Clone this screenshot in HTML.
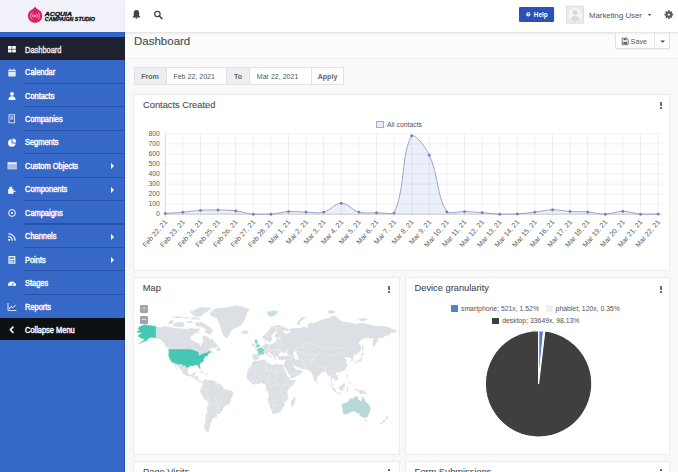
<!DOCTYPE html>
<html><head><meta charset="utf-8">
<style>
*{margin:0;padding:0;box-sizing:border-box}
html,body{width:678px;height:472px;overflow:hidden;background:#f9f9f9;font-family:"Liberation Sans",sans-serif}
.abs{position:absolute}
svg.abs{overflow:visible}
#hdrL{left:0;top:0;width:125px;height:32px;background:#f1f2fa}
#hdrR{left:125px;top:0;width:553px;height:32.5px;background:#fff;border-bottom:1px solid #e6e6e6;box-shadow:0 1px 3px rgba(0,0,0,0.07);z-index:2}
#side{left:0;top:32px;width:125px;height:440px;background:#3668c8}
.nav{position:absolute;left:0;width:125px;height:23.35px;color:#fff;font-size:8.1px;-webkit-text-stroke:0.4px currentColor}
.nav .t{position:absolute;left:25px;top:8.3px;line-height:7px;white-space:nowrap;transform:scale(0.92,1.1);transform-origin:0 0}
.nav .sep{position:absolute;left:24px;right:0;top:-0.6px;height:1.2px;background:#2651a8}
.nav svg{position:absolute;left:7px;top:7.5px}
.nav .car{position:absolute;left:111px;top:9.6px;width:0;height:0;border-left:3.2px solid #fff;border-top:3px solid transparent;border-bottom:3px solid transparent}
#phdr{left:125px;top:33px;width:553px;height:25.5px;background:#fcfcfc;border-bottom:1px solid #f0f0f0}
.panel{position:absolute;background:#fff;border:1px solid #ececec;box-shadow:0 0 1px rgba(0,0,0,0.03)}
.ptitle{position:absolute;font-size:9.3px;color:#484d53;white-space:nowrap;line-height:10px;-webkit-text-stroke:0.1px #484d53}
.keb{position:absolute;width:1.6px;height:7px}
.keb i{position:absolute;left:-0.2px;width:2px;height:2px;border-radius:50%;background:#3a3a3a}
.yl{font-size:6.85px;fill:#5a5a5a;text-anchor:end;font-family:"Liberation Sans",sans-serif}
.xl{text-rendering:geometricPrecision;font-size:7px;fill:#5a5a5a;text-anchor:end;dominant-baseline:middle;font-family:"Liberation Sans",sans-serif}
.sy{display:inline-block;transform:scaleY(1.12)}
.lg{transform:scaleY(1.1);transform-origin:0 50%;position:absolute;font-size:6.85px;color:#555;white-space:nowrap;line-height:7px}
.addon{position:absolute;top:67.4px;height:17.6px;background:#eceef1;border:1px solid #e1e3e6;color:#666;font-weight:bold;font-size:7.1px;line-height:18.2px;text-align:center}
.inp{position:absolute;top:67.4px;height:17.6px;background:#fff;border:1px solid #e1e3e6;border-left:none;color:#555;font-size:7.05px;line-height:17.6px;padding-left:6.8px}
</style></head><body>

<!-- header -->
<div id="hdrL" class="abs">
  <svg class="abs" style="left:0;top:0" width="125" height="32">
    <path d="M35.1 6.9 C36 8.7 38.6 9.5 40.3 11.3 C42.6 13.7 42.6 18.4 40 20.8 C37.4 23.2 32.8 23.2 30.2 20.8 C27.6 18.4 27.6 13.7 29.9 11.3 C31.6 9.5 34.2 8.7 35.1 6.9Z" fill="#dc1f66" stroke="#b8104f" stroke-width="0.4"/>
    <path d="M32.2 12.4 A4.6 4.6 0 0 0 32.2 19.4 M38 12.4 A4.6 4.6 0 0 1 38 19.4" stroke="#f6b9d0" stroke-width="0.8" fill="none"/>
    <path d="M33.5 14.2 A2.3 2.3 0 0 0 33.5 17.6 M36.7 14.2 A2.3 2.3 0 0 1 36.7 17.6" stroke="#fde6ef" stroke-width="0.8" fill="none"/>
    <circle cx="35.1" cy="15.9" r="0.9" fill="#fff"/>
    <text x="44.8" y="15.6" font-family="Liberation Sans" font-weight="bold" font-style="italic" font-size="5.6" textLength="27.2" lengthAdjust="spacingAndGlyphs" fill="#111" stroke="#111" stroke-width="0.35">ACQUIA</text>
    <text x="44.8" y="20.9" font-family="Liberation Sans" font-weight="bold" font-style="italic" font-size="5.2" textLength="50.2" lengthAdjust="spacingAndGlyphs" fill="#111" stroke="#111" stroke-width="0.3">CAMPAIGN STUDIO</text>
  </svg>
</div>
<div id="hdrR" class="abs"></div>
<svg class="abs" style="left:0;top:0;z-index:3" width="678" height="32">
  <!-- bell -->
  <path d="M136.4 10 C138.6 10 139.2 11.8 139.2 13.6 L139.2 15.8 L140.6 17.6 L132.3 17.6 L133.7 15.8 L133.7 13.6 C133.7 11.8 134.3 10 136.4 10Z M135.3 17.8 A1.2 1.2 0 0 0 137.6 17.8Z" fill="#444"/>
  <!-- search -->
  <circle cx="157.4" cy="14" r="2.7" fill="none" stroke="#444" stroke-width="1.2"/>
  <path d="M159.3 16 L162 18.6" stroke="#444" stroke-width="1.5" stroke-linecap="round"/>
  <!-- help button -->
  <rect x="519" y="6.9" width="35.1" height="15" rx="1.2" fill="#2c50b8"/>
  <circle cx="528.3" cy="14.4" r="2.1" fill="#f2f4fb"/>
  <text x="528.35" y="15.7" font-size="3.5" font-weight="bold" fill="#2c50b8" text-anchor="middle" font-family="Liberation Sans">?</text>
  <text x="533.8" y="16.8" font-size="6.4" font-weight="bold" fill="#fff" font-family="Liberation Sans">Help</text>
  <!-- avatar -->
  <rect x="566.6" y="6.2" width="17" height="17" fill="#ececec" stroke="#dadada" stroke-width="0.8"/>
  <circle cx="575.1" cy="14.7" r="6.6" fill="#f7f7f7"/>
  <circle cx="575.1" cy="12.4" r="2.6" fill="#dcdcdc"/>
  <path d="M570.6 19.4 C571.2 16.6 573 15.8 575.1 15.8 C577.2 15.8 579 16.6 579.6 19.4 C578.4 20.6 576.8 21.2 575.1 21.2 C573.4 21.2 571.8 20.6 570.6 19.4Z" fill="#dcdcdc"/>
  <text x="589" y="17.9" font-size="7.8" fill="#555" font-family="Liberation Sans">Marketing User</text>
  <path d="M647.6 14 L651.4 14 L649.5 16Z" fill="#555"/>
  <!-- gear -->
  <g transform="translate(668.8 14.6)" fill="#555">
    <circle r="3" />
    <g id="teeth"><rect x="-0.9" y="-4.3" width="1.8" height="8.6"/><rect x="-0.9" y="-4.3" width="1.8" height="8.6" transform="rotate(45)"/><rect x="-0.9" y="-4.3" width="1.8" height="8.6" transform="rotate(90)"/><rect x="-0.9" y="-4.3" width="1.8" height="8.6" transform="rotate(135)"/></g>
    <circle r="1.2" fill="#fff"/>
  </g>
</svg>

<!-- sidebar -->
<div id="side" class="abs">
  <div class="abs" style="left:0;top:0;width:125px;height:5.4px;background:#3265c8"></div>
  <div class="abs" style="left:124px;top:0;width:1px;height:440px;background:#2f52b0"></div>
  <div class="abs" style="left:125px;top:0;width:1.5px;height:440px;background:#f4f8ff"></div>
</div>
<div class="nav" style="top:37.4px;background:#1e2230;height:22.6px">
  <svg width="10" height="10"><rect x="1" y="1" width="3.6" height="2.9" fill="#fff"/><rect x="5.2" y="1" width="3.6" height="2.9" fill="#fff"/><rect x="1" y="4.5" width="3.6" height="2.9" fill="#fff"/><rect x="5.2" y="4.5" width="3.6" height="2.9" fill="#fff"/></svg>
  <span class="t" style="color:#e8e8ea">Dashboard</span></div>
<div class="nav" style="top:60px">
  <svg width="10" height="10"><rect x="1.3" y="1.8" width="7.4" height="6.6" rx="0.6" fill="#e4ebf8"/><rect x="1.3" y="3" width="7.4" height="0.6" fill="#3668c8"/><rect x="2.6" y="0.6" width="0.9" height="1.8" fill="#e4ebf8"/><rect x="6.5" y="0.6" width="0.9" height="1.8" fill="#e4ebf8"/></svg>
  <span class="t">Calendar</span></div>
<div class="nav" style="top:83.3px"><div class="sep"></div>
  <svg width="10" height="10"><circle cx="5" cy="2.8" r="1.9" fill="#fff"/><path d="M1.5 9 C1.5 6.2 3 5.2 5 5.2 C7 5.2 8.5 6.2 8.5 9Z" fill="#fff"/></svg>
  <span class="t">Contacts</span></div>
<div class="nav" style="top:106.75px"><div class="sep"></div>
  <svg width="10" height="10"><rect x="2" y="0.8" width="5.6" height="8" fill="none" stroke="#dfe6f5" stroke-width="0.9"/><rect x="3.3" y="2.2" width="3" height="3.6" fill="#9fb6e6"/></svg>
  <span class="t">Companies</span></div>
<div class="nav" style="top:130.2px"><div class="sep"></div>
  <svg width="10" height="10"><path d="M4.5 1.2 A3.8 3.8 0 1 0 8.6 5.6 L4.5 5.6Z" fill="#fff"/><path d="M5.5 0.6 A3.8 3.8 0 0 1 9.2 4.5 L5.5 4.5Z" fill="#fff"/></svg>
  <span class="t">Segments</span></div>
<div class="nav" style="top:153.65px"><div class="sep"></div>
  <svg width="10" height="10"><rect x="0.9" y="1.6" width="8.4" height="6.4" fill="#a9bce6"/><rect x="0.9" y="1.6" width="8.4" height="1.5" fill="#eef2fb"/><rect x="0.9" y="1.6" width="8.4" height="6.4" fill="none" stroke="#dfe6f5" stroke-width="0.6"/></svg>
  <span class="t">Custom Objects</span><i class="car"></i></div>
<div class="nav" style="top:177.1px"><div class="sep"></div>
  <svg width="10" height="10"><rect x="1.2" y="4" width="5.2" height="4.8" fill="#fff"/><circle cx="3.8" cy="3" r="1.6" fill="#fff"/><rect x="6.4" y="5.8" width="2" height="1.2" fill="#fff"/></svg>
  <span class="t">Components</span><i class="car"></i></div>
<div class="nav" style="top:200.55px"><div class="sep"></div>
  <svg width="10" height="10"><circle cx="5" cy="5" r="3.4" fill="none" stroke="#fff" stroke-width="1"/><circle cx="5" cy="5" r="1.1" fill="#fff"/></svg>
  <span class="t">Campaigns</span></div>
<div class="nav" style="top:224px"><div class="sep"></div>
  <svg width="10" height="10"><circle cx="2.2" cy="7.8" r="1.1" fill="#fff"/><path d="M1.3 4.6 A4 4 0 0 1 5.4 8.7" fill="none" stroke="#fff" stroke-width="1.1"/><path d="M1.3 1.8 A6.8 6.8 0 0 1 8.2 8.7" fill="none" stroke="#fff" stroke-width="1.1"/></svg>
  <span class="t">Channels</span><i class="car"></i></div>
<div class="nav" style="top:247.45px"><div class="sep"></div>
  <svg width="10" height="10"><rect x="1.4" y="1" width="7" height="7.8" fill="#e6ecf8"/><rect x="2.6" y="2.2" width="4.6" height="1.6" fill="#5f86d4"/><rect x="2.6" y="5" width="1.2" height="1" fill="#5f86d4"/><rect x="4.4" y="5" width="1.2" height="1" fill="#5f86d4"/><rect x="2.6" y="6.6" width="1.2" height="1" fill="#5f86d4"/><rect x="4.4" y="6.6" width="1.2" height="1" fill="#5f86d4"/><rect x="6" y="5" width="1.2" height="2.6" fill="#5f86d4"/></svg>
  <span class="t">Points</span><i class="car"></i></div>
<div class="nav" style="top:270.9px"><div class="sep"></div>
  <svg width="10" height="10"><path d="M0.8 7.8 A4.2 4.2 0 0 1 9.2 7.8Z" fill="#fff"/><path d="M5 7.4 L6.8 4.6" stroke="#3668c8" stroke-width="0.9"/></svg>
  <span class="t">Stages</span></div>
<div class="nav" style="top:294.35px"><div class="sep"></div>
  <svg width="10" height="10"><path d="M1 1 L1 8.5 L9.4 8.5" fill="none" stroke="#e8edf8" stroke-width="0.9"/><path d="M2 7 L4 4.4 L5.8 5.8 L8.6 2.8" fill="none" stroke="#fff" stroke-width="1"/></svg>
  <span class="t">Reports</span></div>
<div class="nav" style="top:317.8px;background:#0e1114;height:22.6px">
  <svg width="10" height="10"><path d="M6.4 1.6 L3.4 4.8 L6.4 8" fill="none" stroke="#fff" stroke-width="1.6"/></svg>
  <span class="t">Collapse Menu</span></div>

<!-- page header -->
<div id="phdr" class="abs"></div>
<div class="abs" style="left:134px;top:35px;font-size:11.5px;color:#474c52;line-height:12px;-webkit-text-stroke:0.15px #474c52">Dashboard</div>
<div class="abs" style="left:614.9px;top:32.3px;width:55.2px;height:16.6px;background:#fff;border:1px solid #e2e2e2;border-radius:1.5px;box-shadow:0 1px 1px rgba(0,0,0,0.05)"></div>
<div class="abs" style="left:654px;top:33px;width:1px;height:15.4px;background:#e6e6e6"></div>
<svg class="abs" style="left:0;top:0" width="678" height="60">
  <path d="M622.2 38.2 L627 38.2 L628.1 39.3 L628.1 44.7 L622.2 44.7Z" fill="none" stroke="#666" stroke-width="0.9"/>
  <rect x="623.6" y="38.4" width="3" height="1.8" fill="#666"/>
  <rect x="623.3" y="41.8" width="3.8" height="2.4" fill="#666"/>
  <path d="M660.4 40.4 L665 40.4 L662.7 42.8Z" fill="#444"/>
</svg>
<div class="abs" style="left:630.6px;top:38.2px;font-size:7.2px;color:#555;line-height:8px">Save</div>

<!-- date range -->
<div class="addon" style="left:133.5px;width:33.1px"><span class="sy">From</span></div>
<div class="inp" style="left:166.6px;width:60.6px"><span class="sy">Feb 22, 2021</span></div>
<div class="addon" style="left:227.2px;width:22.8px;border-left:none"><span class="sy">To</span></div>
<div class="inp" style="left:250px;width:62px"><span class="sy">Mar 22, 2021</span></div>
<div class="inp" style="left:312px;width:32px;padding-left:0;text-align:center;font-weight:bold;color:#666;font-size:7.1px;line-height:18.8px"><span class="sy">Apply</span></div>

<!-- contacts created panel -->
<div class="panel" style="left:133px;top:94px;width:537px;height:177px"></div>
<div class="ptitle" style="left:143px;top:99.6px">Contacts Created</div>
<div class="keb" style="left:659.8px;top:101.6px"><i style="top:0"></i><i style="top:2.5px"></i><i style="top:5px"></i></div>
<div class="abs" style="left:376.2px;top:120.8px;width:7.6px;height:7.6px;background:#e8ecf8;border:0.8px solid #a2acd6"></div>
<div class="lg" style="left:387px;top:120.6px">All contacts</div>
<svg class="abs" style="left:0;top:0" width="678" height="472" viewBox="0 0 678 472"><line x1="165.3" y1="214.20" x2="662" y2="214.20" stroke="#000" stroke-opacity="0.1" stroke-width="0.6"/><text x="159.8" y="216.40" class="yl">0</text><line x1="165.3" y1="204.15" x2="662" y2="204.15" stroke="#000" stroke-opacity="0.1" stroke-width="0.6"/><text x="159.8" y="206.35" class="yl">100</text><line x1="165.3" y1="194.10" x2="662" y2="194.10" stroke="#000" stroke-opacity="0.1" stroke-width="0.6"/><text x="159.8" y="196.30" class="yl">200</text><line x1="165.3" y1="184.05" x2="662" y2="184.05" stroke="#000" stroke-opacity="0.1" stroke-width="0.6"/><text x="159.8" y="186.25" class="yl">300</text><line x1="165.3" y1="174.00" x2="662" y2="174.00" stroke="#000" stroke-opacity="0.1" stroke-width="0.6"/><text x="159.8" y="176.20" class="yl">400</text><line x1="165.3" y1="163.95" x2="662" y2="163.95" stroke="#000" stroke-opacity="0.1" stroke-width="0.6"/><text x="159.8" y="166.15" class="yl">500</text><line x1="165.3" y1="153.90" x2="662" y2="153.90" stroke="#000" stroke-opacity="0.1" stroke-width="0.6"/><text x="159.8" y="156.10" class="yl">600</text><line x1="165.3" y1="143.85" x2="662" y2="143.85" stroke="#000" stroke-opacity="0.1" stroke-width="0.6"/><text x="159.8" y="146.05" class="yl">700</text><line x1="165.3" y1="133.80" x2="662" y2="133.80" stroke="#000" stroke-opacity="0.1" stroke-width="0.6"/><text x="159.8" y="136.00" class="yl">800</text><line x1="165.30" y1="133.80" x2="165.30" y2="217.20" stroke="#000" stroke-opacity="0.25" stroke-width="0.6"/><line x1="182.90" y1="133.80" x2="182.90" y2="217.20" stroke="#000" stroke-opacity="0.1" stroke-width="0.6"/><line x1="200.50" y1="133.80" x2="200.50" y2="217.20" stroke="#000" stroke-opacity="0.1" stroke-width="0.6"/><line x1="218.10" y1="133.80" x2="218.10" y2="217.20" stroke="#000" stroke-opacity="0.1" stroke-width="0.6"/><line x1="235.70" y1="133.80" x2="235.70" y2="217.20" stroke="#000" stroke-opacity="0.1" stroke-width="0.6"/><line x1="253.30" y1="133.80" x2="253.30" y2="217.20" stroke="#000" stroke-opacity="0.1" stroke-width="0.6"/><line x1="270.90" y1="133.80" x2="270.90" y2="217.20" stroke="#000" stroke-opacity="0.1" stroke-width="0.6"/><line x1="288.50" y1="133.80" x2="288.50" y2="217.20" stroke="#000" stroke-opacity="0.1" stroke-width="0.6"/><line x1="306.10" y1="133.80" x2="306.10" y2="217.20" stroke="#000" stroke-opacity="0.1" stroke-width="0.6"/><line x1="323.70" y1="133.80" x2="323.70" y2="217.20" stroke="#000" stroke-opacity="0.1" stroke-width="0.6"/><line x1="341.30" y1="133.80" x2="341.30" y2="217.20" stroke="#000" stroke-opacity="0.1" stroke-width="0.6"/><line x1="358.90" y1="133.80" x2="358.90" y2="217.20" stroke="#000" stroke-opacity="0.1" stroke-width="0.6"/><line x1="376.50" y1="133.80" x2="376.50" y2="217.20" stroke="#000" stroke-opacity="0.1" stroke-width="0.6"/><line x1="394.10" y1="133.80" x2="394.10" y2="217.20" stroke="#000" stroke-opacity="0.1" stroke-width="0.6"/><line x1="411.70" y1="133.80" x2="411.70" y2="217.20" stroke="#000" stroke-opacity="0.1" stroke-width="0.6"/><line x1="429.30" y1="133.80" x2="429.30" y2="217.20" stroke="#000" stroke-opacity="0.1" stroke-width="0.6"/><line x1="446.90" y1="133.80" x2="446.90" y2="217.20" stroke="#000" stroke-opacity="0.1" stroke-width="0.6"/><line x1="464.50" y1="133.80" x2="464.50" y2="217.20" stroke="#000" stroke-opacity="0.1" stroke-width="0.6"/><line x1="482.10" y1="133.80" x2="482.10" y2="217.20" stroke="#000" stroke-opacity="0.1" stroke-width="0.6"/><line x1="499.70" y1="133.80" x2="499.70" y2="217.20" stroke="#000" stroke-opacity="0.1" stroke-width="0.6"/><line x1="517.30" y1="133.80" x2="517.30" y2="217.20" stroke="#000" stroke-opacity="0.1" stroke-width="0.6"/><line x1="534.90" y1="133.80" x2="534.90" y2="217.20" stroke="#000" stroke-opacity="0.1" stroke-width="0.6"/><line x1="552.50" y1="133.80" x2="552.50" y2="217.20" stroke="#000" stroke-opacity="0.1" stroke-width="0.6"/><line x1="570.10" y1="133.80" x2="570.10" y2="217.20" stroke="#000" stroke-opacity="0.1" stroke-width="0.6"/><line x1="587.70" y1="133.80" x2="587.70" y2="217.20" stroke="#000" stroke-opacity="0.1" stroke-width="0.6"/><line x1="605.30" y1="133.80" x2="605.30" y2="217.20" stroke="#000" stroke-opacity="0.1" stroke-width="0.6"/><line x1="622.90" y1="133.80" x2="622.90" y2="217.20" stroke="#000" stroke-opacity="0.1" stroke-width="0.6"/><line x1="640.50" y1="133.80" x2="640.50" y2="217.20" stroke="#000" stroke-opacity="0.1" stroke-width="0.6"/><line x1="658.10" y1="133.80" x2="658.10" y2="217.20" stroke="#000" stroke-opacity="0.1" stroke-width="0.6"/><line x1="165.3" y1="214.20" x2="662" y2="214.20" stroke="#000" stroke-opacity="0.25" stroke-width="0.6"/><path d="M165.30 213.40C172.34 212.91 175.87 212.79 182.90 212.19C189.95 211.59 193.44 210.82 200.50 210.38C207.52 209.94 211.06 209.88 218.10 209.98C225.14 210.08 228.72 210.05 235.70 210.88C242.80 211.73 246.20 213.53 253.30 214.20C260.28 214.20 263.90 214.20 270.90 214.20C277.98 213.67 281.42 212.01 288.50 211.59C295.50 211.17 299.06 211.99 306.10 212.09C313.14 212.19 317.06 213.76 323.70 212.09C331.14 210.22 334.26 203.25 341.30 203.25C348.34 203.25 351.47 210.07 358.90 212.09C365.55 213.89 369.46 212.59 376.50 212.79C383.54 212.99 391.54 214.20 394.10 213.09C405.62 187.90 401.12 153.21 411.70 135.81C415.20 133.80 424.99 145.89 429.30 155.21C439.07 176.32 436.04 194.49 446.90 211.89C450.12 214.20 457.47 211.45 464.50 211.59C471.55 211.73 475.07 212.07 482.10 212.59C489.15 213.12 492.65 213.94 499.70 214.20C506.73 214.20 510.28 214.20 517.30 213.90C524.36 213.48 527.87 212.91 534.90 212.09C541.95 211.26 545.45 209.90 552.50 209.78C559.53 209.66 563.04 211.04 570.10 211.49C577.12 211.93 580.69 211.45 587.70 211.99C594.77 212.53 598.28 214.20 605.30 214.20C612.36 214.06 615.86 211.29 622.90 211.29C629.94 211.29 633.41 213.63 640.50 214.20C647.49 214.20 651.06 214.14 658.10 214.10L658.10 214.20 L165.30 214.20 Z" fill="rgba(70,110,200,0.11)"/><path d="M165.30 213.40C172.34 212.91 175.87 212.79 182.90 212.19C189.95 211.59 193.44 210.82 200.50 210.38C207.52 209.94 211.06 209.88 218.10 209.98C225.14 210.08 228.72 210.05 235.70 210.88C242.80 211.73 246.20 213.53 253.30 214.20C260.28 214.20 263.90 214.20 270.90 214.20C277.98 213.67 281.42 212.01 288.50 211.59C295.50 211.17 299.06 211.99 306.10 212.09C313.14 212.19 317.06 213.76 323.70 212.09C331.14 210.22 334.26 203.25 341.30 203.25C348.34 203.25 351.47 210.07 358.90 212.09C365.55 213.89 369.46 212.59 376.50 212.79C383.54 212.99 391.54 214.20 394.10 213.09C405.62 187.90 401.12 153.21 411.70 135.81C415.20 133.80 424.99 145.89 429.30 155.21C439.07 176.32 436.04 194.49 446.90 211.89C450.12 214.20 457.47 211.45 464.50 211.59C471.55 211.73 475.07 212.07 482.10 212.59C489.15 213.12 492.65 213.94 499.70 214.20C506.73 214.20 510.28 214.20 517.30 213.90C524.36 213.48 527.87 212.91 534.90 212.09C541.95 211.26 545.45 209.90 552.50 209.78C559.53 209.66 563.04 211.04 570.10 211.49C577.12 211.93 580.69 211.45 587.70 211.99C594.77 212.53 598.28 214.20 605.30 214.20C612.36 214.06 615.86 211.29 622.90 211.29C629.94 211.29 633.41 213.63 640.50 214.20C647.49 214.20 651.06 214.14 658.10 214.10" fill="none" stroke="#7e8bc0" stroke-width="0.75"/><circle cx="165.30" cy="213.40" r="1.2" fill="#7a84ad" stroke="#6a74a0" stroke-width="0.4"/><circle cx="182.90" cy="212.19" r="1.2" fill="#7a84ad" stroke="#6a74a0" stroke-width="0.4"/><circle cx="200.50" cy="210.38" r="1.2" fill="#7a84ad" stroke="#6a74a0" stroke-width="0.4"/><circle cx="218.10" cy="209.98" r="1.2" fill="#7a84ad" stroke="#6a74a0" stroke-width="0.4"/><circle cx="235.70" cy="210.88" r="1.2" fill="#7a84ad" stroke="#6a74a0" stroke-width="0.4"/><circle cx="253.30" cy="214.20" r="1.2" fill="#7a84ad" stroke="#6a74a0" stroke-width="0.4"/><circle cx="270.90" cy="214.20" r="1.2" fill="#7a84ad" stroke="#6a74a0" stroke-width="0.4"/><circle cx="288.50" cy="211.59" r="1.2" fill="#7a84ad" stroke="#6a74a0" stroke-width="0.4"/><circle cx="306.10" cy="212.09" r="1.2" fill="#7a84ad" stroke="#6a74a0" stroke-width="0.4"/><circle cx="323.70" cy="212.09" r="1.2" fill="#7a84ad" stroke="#6a74a0" stroke-width="0.4"/><circle cx="341.30" cy="203.25" r="1.2" fill="#7a84ad" stroke="#6a74a0" stroke-width="0.4"/><circle cx="358.90" cy="212.09" r="1.2" fill="#7a84ad" stroke="#6a74a0" stroke-width="0.4"/><circle cx="376.50" cy="212.79" r="1.2" fill="#7a84ad" stroke="#6a74a0" stroke-width="0.4"/><circle cx="394.10" cy="213.09" r="1.2" fill="#7a84ad" stroke="#6a74a0" stroke-width="0.4"/><circle cx="411.70" cy="135.81" r="1.2" fill="#7a84ad" stroke="#6a74a0" stroke-width="0.4"/><circle cx="429.30" cy="155.21" r="1.2" fill="#7a84ad" stroke="#6a74a0" stroke-width="0.4"/><circle cx="446.90" cy="211.89" r="1.2" fill="#7a84ad" stroke="#6a74a0" stroke-width="0.4"/><circle cx="464.50" cy="211.59" r="1.2" fill="#7a84ad" stroke="#6a74a0" stroke-width="0.4"/><circle cx="482.10" cy="212.59" r="1.2" fill="#7a84ad" stroke="#6a74a0" stroke-width="0.4"/><circle cx="499.70" cy="214.20" r="1.2" fill="#7a84ad" stroke="#6a74a0" stroke-width="0.4"/><circle cx="517.30" cy="213.90" r="1.2" fill="#7a84ad" stroke="#6a74a0" stroke-width="0.4"/><circle cx="534.90" cy="212.09" r="1.2" fill="#7a84ad" stroke="#6a74a0" stroke-width="0.4"/><circle cx="552.50" cy="209.78" r="1.2" fill="#7a84ad" stroke="#6a74a0" stroke-width="0.4"/><circle cx="570.10" cy="211.49" r="1.2" fill="#7a84ad" stroke="#6a74a0" stroke-width="0.4"/><circle cx="587.70" cy="211.99" r="1.2" fill="#7a84ad" stroke="#6a74a0" stroke-width="0.4"/><circle cx="605.30" cy="214.20" r="1.2" fill="#7a84ad" stroke="#6a74a0" stroke-width="0.4"/><circle cx="622.90" cy="211.29" r="1.2" fill="#7a84ad" stroke="#6a74a0" stroke-width="0.4"/><circle cx="640.50" cy="214.20" r="1.2" fill="#7a84ad" stroke="#6a74a0" stroke-width="0.4"/><circle cx="658.10" cy="214.10" r="1.2" fill="#7a84ad" stroke="#6a74a0" stroke-width="0.4"/><text transform="translate(166.30 221.2) rotate(-49)" class="xl">Feb 22, 21</text><text transform="translate(183.90 221.2) rotate(-49)" class="xl">Feb 23, 21</text><text transform="translate(201.50 221.2) rotate(-49)" class="xl">Feb 24, 21</text><text transform="translate(219.10 221.2) rotate(-49)" class="xl">Feb 25, 21</text><text transform="translate(236.70 221.2) rotate(-49)" class="xl">Feb 26, 21</text><text transform="translate(254.30 221.2) rotate(-49)" class="xl">Feb 27, 21</text><text transform="translate(271.90 221.2) rotate(-49)" class="xl">Feb 28, 21</text><text transform="translate(289.50 221.2) rotate(-49)" class="xl">Mar 1, 21</text><text transform="translate(307.10 221.2) rotate(-49)" class="xl">Mar 2, 21</text><text transform="translate(324.70 221.2) rotate(-49)" class="xl">Mar 3, 21</text><text transform="translate(342.30 221.2) rotate(-49)" class="xl">Mar 4, 21</text><text transform="translate(359.90 221.2) rotate(-49)" class="xl">Mar 5, 21</text><text transform="translate(377.50 221.2) rotate(-49)" class="xl">Mar 6, 21</text><text transform="translate(395.10 221.2) rotate(-49)" class="xl">Mar 7, 21</text><text transform="translate(412.70 221.2) rotate(-49)" class="xl">Mar 8, 21</text><text transform="translate(430.30 221.2) rotate(-49)" class="xl">Mar 9, 21</text><text transform="translate(447.90 221.2) rotate(-49)" class="xl">Mar 10, 21</text><text transform="translate(465.50 221.2) rotate(-49)" class="xl">Mar 11, 21</text><text transform="translate(483.10 221.2) rotate(-49)" class="xl">Mar 12, 21</text><text transform="translate(500.70 221.2) rotate(-49)" class="xl">Mar 13, 21</text><text transform="translate(518.30 221.2) rotate(-49)" class="xl">Mar 14, 21</text><text transform="translate(535.90 221.2) rotate(-49)" class="xl">Mar 15, 21</text><text transform="translate(553.50 221.2) rotate(-49)" class="xl">Mar 16, 21</text><text transform="translate(571.10 221.2) rotate(-49)" class="xl">Mar 17, 21</text><text transform="translate(588.70 221.2) rotate(-49)" class="xl">Mar 18, 21</text><text transform="translate(606.30 221.2) rotate(-49)" class="xl">Mar 19, 21</text><text transform="translate(623.90 221.2) rotate(-49)" class="xl">Mar 20, 21</text><text transform="translate(641.50 221.2) rotate(-49)" class="xl">Mar 21, 21</text><text transform="translate(659.10 221.2) rotate(-49)" class="xl">Mar 22, 21</text></svg>

<!-- map panel -->
<div class="panel" style="left:133px;top:277px;width:267px;height:178px"></div>
<div class="ptitle" style="left:142.8px;top:283px">Map</div>
<div class="keb" style="left:388.3px;top:285.6px"><i style="top:0"></i><i style="top:2.5px"></i><i style="top:5px"></i></div>
<svg class="abs" style="left:134px;top:278px" width="265" height="176" viewBox="134 278 265 176"><g stroke="#fff" stroke-width="0.25"><path d="M137.5 328.3L141.0 325.7L144.8 324.4L148.3 325.1L154.8 326.0L156.3 326.5L159.9 327.5L164.3 326.1L168.7 326.8L175.2 328.0L180.3 328.3L187.6 328.9L190.5 327.7L194.9 328.7L199.2 328.0L199.6 330.5L196.0 332.9L190.5 336.9L191.2 339.3L194.9 341.7L199.0 343.2L200.7 346.7L201.4 343.7L203.1 341.7L202.5 338.0L202.2 335.4L205.8 335.8L208.3 336.9L210.2 339.6L212.0 337.7L214.2 341.7L217.4 344.7L218.4 346.2L215.3 347.9L210.9 348.1L208.0 350.5L212.0 349.3L211.6 350.9L214.5 352.3L210.9 353.8L208.0 353.9L208.0 355.7L205.1 356.7L203.6 359.7L204.0 361.1L200.0 363.8L199.8 365.6L200.7 368.0L200.0 369.2L198.7 367.4L197.6 365.4L194.1 365.2L193.8 366.2L190.5 365.8L188.1 367.4L188.0 369.3L187.8 371.6L189.1 373.9L190.1 374.5L192.7 374.1L193.2 372.4L195.6 372.0L195.2 374.7L194.7 376.2L197.8 376.3L198.3 377.0L198.2 379.9L199.6 381.3L201.1 381.0L202.6 381.6L202.3 382.4L200.7 382.4L198.5 381.8L196.6 380.6L195.2 378.4L192.3 377.6L190.1 376.0L188.3 376.3L185.4 375.2L182.1 373.1L182.3 371.2L180.3 369.3L177.4 365.8L175.4 363.9L176.7 367.0L178.9 370.9L178.6 370.9L177.3 369.5L175.6 367.1L174.1 364.2L173.6 363.2L171.1 361.8L169.8 359.0L168.7 356.7L168.3 354.5L168.7 351.7L168.2 349.6L169.4 349.1L167.9 348.1L165.8 347.2L164.3 343.7L162.1 341.2L159.9 339.6L157.0 338.3L154.1 338.0L151.4 337.4L148.3 338.8L146.8 340.9L143.9 341.7L141.0 343.2L138.8 343.9L136.3 344.8L138.1 344.0L141.7 341.7L144.3 339.4L141.0 338.2L137.9 336.3L138.8 334.6L141.7 332.9L138.1 332.8L136.4 331.6L139.5 330.1L137.5 328.3Z" fill="#dcdfe3"/><path d="M209.4 313.9L212.3 317.0L216.7 318.5L218.9 323.5L219.6 326.1L221.1 328.7L221.8 332.3L223.3 335.8L226.2 338.0L227.6 337.8L229.1 335.2L230.5 331.7L234.9 328.3L240.7 326.1L242.9 322.8L245.1 319.2L246.6 313.9L250.2 308.9L237.1 305.3L226.2 307.2L216.7 308.0L213.8 309.4L210.9 311.8Z" fill="#dcdfe3"/><path d="M241.1 331.7L242.9 330.5L247.3 330.5L249.1 332.3L245.8 334.2L242.6 333.7Z" fill="#dcdfe3"/><path d="M202.6 381.6L204.0 380.1L206.2 379.3L206.9 380.2L209.4 380.2L213.8 380.1L215.3 381.7L217.4 383.5L220.4 383.9L221.8 385.0L222.5 386.8L223.6 388.6L226.5 389.7L229.8 389.9L233.1 391.7L233.5 394.1L232.0 396.7L230.5 400.4L230.0 403.0L228.5 404.8L226.5 405.1L223.6 407.3L223.4 409.2L221.1 412.0L219.6 414.0L216.4 413.9L217.4 415.5L216.9 417.1L213.8 417.8L213.6 419.1L211.6 419.5L212.3 420.8L211.3 423.1L209.8 424.4L210.9 425.8L209.1 428.2L209.2 429.9L209.1 432.1L210.2 432.6L207.3 432.6L204.7 429.6L204.0 425.8L205.1 422.2L205.4 418.7L205.4 416.1L206.9 412.0L206.9 408.8L207.6 405.7L207.8 401.5L204.3 399.3L202.9 397.0L201.1 393.4L199.8 391.9L200.5 390.4L200.7 389.5L200.3 387.9L201.6 386.6L202.5 385.4L202.7 383.2L202.2 382.4Z" fill="#dcdfe3"/><path d="M254.9 360.5L254.2 359.8L252.5 359.7L252.5 358.2L252.0 358.0L252.5 355.4L252.2 354.5L253.1 353.9L257.6 354.2L258.1 351.7L257.3 350.7L255.5 350.0L255.5 349.4L257.8 349.3L257.6 348.4L260.0 348.0L260.8 347.1L261.9 346.8L262.4 345.2L264.0 344.7L265.3 344.3L265.2 342.7L264.9 341.2L266.6 340.4L264.8 340.0L262.9 339.1L262.6 336.3L264.8 334.4L267.7 331.4L269.9 328.0L272.0 326.4L275.7 325.1L279.3 324.8L283.0 326.8L285.5 327.4L288.8 329.3L291.0 328.3L297.5 328.0L301.2 327.7L302.6 326.4L308.4 327.4L307.4 324.1L311.4 322.4L313.5 323.5L317.2 321.4L322.3 319.5L328.1 317.8L334.7 315.2L341.2 321.1L346.3 322.1L352.1 322.8L355.8 324.1L360.9 322.8L368.1 324.1L375.4 326.1L382.7 326.1L388.5 327.0L392.9 329.0L397.5 331.1L394.3 333.1L391.4 332.3L389.3 335.2L385.6 336.0L382.7 338.0L378.3 338.1L377.6 341.2L375.1 345.2L372.9 347.3L372.3 341.7L374.0 338.0L371.8 338.7L368.1 338.5L363.0 338.7L359.4 341.7L359.0 344.2L361.6 345.7L361.2 349.5L359.4 351.8L357.2 354.1L354.7 354.7L353.4 356.3L353.2 360.5L351.4 361.7L350.9 360.5L351.2 359.0L349.9 357.6L347.2 358.0L347.5 356.4L345.2 357.8L344.7 358.6L348.1 359.7L345.9 361.3L347.0 363.5L347.6 364.8L346.7 367.0L345.9 368.9L344.1 370.5L341.6 371.5L339.4 372.2L337.6 372.0L336.6 373.0L336.0 373.9L337.9 376.8L338.5 379.1L337.0 380.3L335.4 381.6L335.2 380.4L334.1 380.2L333.6 379.0L332.3 378.1L331.2 380.4L332.0 382.1L332.1 383.2L334.2 385.0L334.3 386.9L332.7 385.9L331.9 384.3L330.5 382.1L330.7 379.1L330.1 375.8L328.5 376.3L327.6 375.9L327.7 374.3L326.1 372.6L325.8 371.3L324.8 371.5L323.4 371.8L322.3 372.1L321.2 373.3L319.0 375.4L317.4 376.5L317.3 378.4L317.0 380.4L315.4 382.0L314.5 380.9L313.4 378.5L312.4 375.6L311.9 373.5L311.8 372.0L310.3 372.5L309.2 371.3L308.8 370.5L307.8 369.5L305.9 369.2L303.8 369.2L300.7 368.8L300.1 367.7L298.3 368.0L296.4 367.1L295.4 365.4L294.2 365.5L294.2 367.0L295.4 368.4L296.3 369.7L298.6 369.9L299.8 368.5L299.9 369.7L301.5 370.4L302.5 371.3L301.5 372.8L300.9 374.0L299.1 375.0L297.0 376.2L294.2 377.6L291.7 378.5L290.5 378.6L290.1 376.5L289.2 374.7L287.4 372.0L285.9 369.3L284.6 367.0L284.3 365.8L283.8 367.1L283.1 366.6L282.6 365.4L282.5 364.4L283.8 364.4L284.4 363.0L285.1 361.2L285.2 359.8L284.1 359.8L282.6 360.4L281.1 360.2L279.5 359.9L278.7 359.3L278.2 358.0L278.0 356.6L275.4 356.7L276.0 358.7L275.3 360.2L274.2 359.3L274.2 358.2L273.1 356.6L273.0 355.4L270.6 354.1L268.9 352.2L267.9 352.4L268.0 353.5L269.1 355.0L270.6 355.5L272.4 357.0L271.3 358.0L271.0 358.8L270.4 357.1L268.0 355.8L266.6 354.6L265.3 353.3L263.5 354.4L262.2 354.2L261.2 354.5L261.3 355.5L259.5 356.3L258.7 357.6L259.1 358.2L258.4 359.2L257.3 359.9Z" fill="#dcdfe3"/><path d="M254.6 360.7L251.8 363.0L251.9 365.4L249.5 367.1L246.6 372.4L246.9 373.5L247.1 375.8L246.2 377.1L246.8 378.8L248.0 379.9L249.5 381.3L250.6 382.8L253.5 384.7L256.0 384.1L258.2 384.3L260.4 383.3L262.2 383.3L263.7 384.8L265.1 384.6L266.0 385.7L265.9 387.2L265.5 388.6L267.5 391.4L268.4 393.7L269.0 395.9L267.7 398.9L267.5 401.1L269.5 404.6L270.0 408.0L271.3 410.0L272.3 413.6L273.5 414.3L275.3 413.6L277.6 413.6L278.6 413.2L281.1 411.2L282.6 409.2L282.8 407.3L284.8 405.7L284.6 404.2L284.3 402.7L285.5 401.5L287.9 399.6L288.4 395.9L287.5 393.0L287.5 391.5L288.4 389.7L289.9 388.3L291.0 386.6L293.5 384.6L295.7 381.0L296.3 379.3L293.9 379.7L291.0 380.3L290.4 379.4L289.4 378.0L287.7 376.5L287.0 374.7L286.0 372.4L285.1 370.1L283.7 367.8L282.6 365.4L282.5 364.4L280.1 364.7L277.1 363.8L273.5 364.6L273.1 365.2L271.3 364.6L270.0 363.5L266.9 362.6L266.4 359.8L266.9 359.7L265.1 359.7L261.1 359.8L258.2 360.8Z" fill="#dcdfe3"/><path d="M364.3 419.3L366.9 419.4L366.7 421.5L365.8 421.8L364.6 420.6Z" fill="#dcdfe3"/><path d="M211.1 334.4L213.0 330.3L209.5 326.6L205.7 324.6L201.2 322.1L194.8 322.3L196.1 326.4L201.2 327.0L206.3 329.7L204.4 332.4L208.9 334.4Z" fill="#dcdfe3"/><path d="M173.7 326.5L182.0 327.3L184.6 326.5L183.9 322.4L178.8 321.8L173.7 323.0L173.1 324.8Z" fill="#dcdfe3"/><path d="M168.0 323.4L170.2 320.2L174.1 320.5L171.5 324.2Z" fill="#dcdfe3"/><path d="M200.7 316.8L194.3 316.4L191.1 313.0L193.0 310.1L200.7 307.0L212.2 307.8L208.4 311.1L203.9 313.7Z" fill="#dcdfe3"/><path d="M200.1 319.6L192.4 319.4L189.8 317.4L194.9 317.2L200.1 317.8Z" fill="#dcdfe3"/><path d="M186.9 319.0L182.4 318.0L174.7 318.4L175.3 316.0L182.4 317.1L186.9 317.4Z" fill="#dcdfe3"/><path d="M192.9 323.3L186.5 322.7L185.9 321.5L192.3 320.8Z" fill="#dcdfe3"/><path d="M200.4 333.4L195.9 332.9L196.5 331.5L199.1 332.3Z" fill="#dcdfe3"/><path d="M174.4 317.2L170.9 316.8L172.4 315.8Z" fill="#dcdfe3"/><path d="M188.6 318.7L186.0 318.3L186.5 317.3L188.6 317.6Z" fill="#dcdfe3"/><path d="M194.6 314.0L190.5 313.4L190.5 310.5L193.6 311.1Z" fill="#dcdfe3"/><path d="M189.3 327.8L187.3 327.2L188.3 326.6Z" fill="#dcdfe3"/><path d="M185.7 314.8L183.7 314.3L184.7 313.4Z" fill="#dcdfe3"/><path d="M203.2 328.2L201.2 326.6L202.7 326.4Z" fill="#dcdfe3"/><path d="M215.8 350.4L218.5 346.6L220.4 348.6L220.6 350.9L218.2 351.0Z" fill="#dcdfe3"/><path d="M197.1 371.7L199.2 370.8L202.5 371.5L204.9 373.0L202.4 373.2L200.3 371.8L197.8 371.8Z" fill="#dcdfe3"/><path d="M204.7 374.3L206.2 373.2L208.3 373.5L209.1 374.2L206.9 375.0L204.7 374.5Z" fill="#dcdfe3"/><path d="M254.8 348.1L256.8 347.6L260.0 347.0L260.2 345.6L259.1 344.7L257.8 343.2L257.5 342.4L257.6 340.6L256.6 339.5L255.3 339.5L254.4 340.6L254.9 342.2L255.4 343.4L256.6 343.6L256.8 344.8L255.6 344.9L255.4 346.2L256.5 346.8L255.2 346.5Z" fill="#dcdfe3"/><path d="M254.6 346.0L254.4 343.7L253.6 342.9L252.8 343.7L251.7 344.2L251.8 346.2L251.4 346.7L253.1 346.6Z" fill="#dcdfe3"/><path d="M266.9 313.9L270.6 317.0L275.0 315.5L278.6 311.5L273.5 310.6L267.7 311.8Z" fill="#dcdfe3"/><path d="M296.4 324.1L300.4 325.5L299.7 322.1L304.8 318.5L308.8 316.6L301.9 317.3L298.3 320.7Z" fill="#dcdfe3"/><path d="M328.1 313.1L331.7 313.9L335.4 312.3L333.2 309.8L328.1 310.6Z" fill="#dcdfe3"/><path d="M357.9 319.2L362.3 321.4L368.1 319.2L364.5 317.8Z" fill="#dcdfe3"/><path d="M362.3 351.8L363.4 351.4L363.0 349.1L364.1 349.1L362.7 343.9L362.1 346.2L362.3 350.0Z" fill="#dcdfe3"/><path d="M360.9 355.8L361.7 355.6L363.3 355.4L364.9 354.3L362.2 352.4L360.7 355.0Z" fill="#dcdfe3"/><path d="M354.3 361.9L357.2 362.3L358.3 361.9L360.1 361.5L361.5 360.8L362.0 358.6L362.2 357.1L361.9 355.9L360.9 356.4L360.7 358.0L359.8 359.3L358.3 359.7L357.6 360.8L355.8 360.9L354.7 361.8Z" fill="#dcdfe3"/><path d="M353.2 362.5L354.7 362.2L354.8 364.2L353.7 364.6Z" fill="#dcdfe3"/><path d="M346.4 370.9L346.9 371.7L347.7 369.3L347.0 369.1Z" fill="#dcdfe3"/><path d="M338.0 373.8L339.4 374.5L339.7 373.3L339.1 373.1Z" fill="#dcdfe3"/><path d="M317.0 380.7L317.3 380.7L318.6 382.4L317.9 383.5L317.2 383.4L317.0 382.1Z" fill="#dcdfe3"/><path d="M346.3 374.3L348.0 374.3L348.1 375.4L347.6 376.5L349.2 378.4L347.0 377.8L346.7 377.3L346.2 376.2Z" fill="#dcdfe3"/><path d="M347.8 382.8L350.3 380.7L351.0 382.8L350.3 383.7L348.8 382.4Z" fill="#dcdfe3"/><path d="M328.3 383.8L330.3 385.0L332.0 386.4L334.5 388.6L336.1 390.2L336.0 392.1L335.0 392.1L333.2 390.8L332.0 388.6L330.9 386.7L328.8 385.1Z" fill="#dcdfe3"/><path d="M335.5 392.9L336.1 392.3L337.9 392.6L339.7 392.6L342.3 393.5L342.3 394.2L339.0 393.9L336.5 393.3Z" fill="#dcdfe3"/><path d="M338.3 386.6L339.0 389.0L339.7 390.1L342.3 390.8L343.8 390.1L343.4 387.9L344.8 387.2L345.6 384.3L344.3 382.8L343.0 384.0L341.2 385.6L339.7 386.6L338.7 386.4Z" fill="#dcdfe3"/><path d="M345.9 391.9L346.7 389.4L345.9 387.5L346.7 387.2L349.9 386.8L347.4 388.6L348.5 388.6L347.4 389.4L348.5 391.2L347.0 391.5Z" fill="#dcdfe3"/><path d="M354.3 388.8L356.5 388.6L357.6 390.3L361.6 389.8L365.1 391.4L366.3 392.3L368.1 395.5L366.0 394.1L363.8 393.5L361.6 394.5L359.4 394.0L359.0 391.5L355.8 391.0L355.0 389.9Z" fill="#dcdfe3"/><path d="M294.8 396.7L295.7 399.3L295.2 400.4L293.3 406.3L291.8 406.9L290.8 404.2L291.3 402.3L291.0 400.4L292.8 399.5L293.9 397.8Z" fill="#dcdfe3"/><path d="M384.7 414.0L386.0 415.3L387.1 416.5L388.9 416.7L387.8 418.2L386.6 420.0L386.0 418.5L385.5 418.0L386.0 416.1Z" fill="#dcdfe3"/><path d="M384.7 419.1L385.8 420.1L384.9 422.0L383.6 422.6L382.0 424.5L380.2 424.0L381.5 422.2L383.4 420.4Z" fill="#dcdfe3"/><path d="M266.7 340.4L267.5 340.4L268.3 342.6L269.3 342.8L270.9 341.5L272.4 338.7L271.5 336.3L271.5 335.3L273.7 333.7L275.1 331.6L277.5 332.3L274.6 334.6L274.6 336.3L275.1 337.5L277.1 337.8L280.9 338.1L279.3 338.6L276.9 338.6L276.0 339.1L276.5 341.2L274.7 340.8L274.2 341.7L274.3 342.5L272.5 343.8L269.5 344.3L267.7 344.0L266.4 343.8L266.6 342.0Z" fill="#fff"/><path d="M279.0 355.0L279.7 353.2L281.1 351.4L283.3 353.2L285.5 352.5L286.6 350.9L287.8 350.9L286.2 352.7L289.2 355.4L285.1 355.8L281.5 356.1L279.7 356.3Z" fill="#fff"/><path d="M293.2 353.2L295.0 351.4L297.5 351.4L296.1 353.6L297.9 356.7L298.3 359.4L295.3 359.3L294.6 358.0L295.3 356.3L293.5 354.5Z" fill="#fff"/><path d="M284.1 332.9L285.9 333.7L288.4 332.8L291.0 331.1L288.8 330.5L287.0 331.1L283.0 330.5Z" fill="#fff"/><path d="M341.4 404.2L341.9 407.6L342.7 410.4L342.7 413.6L344.5 414.5L348.8 413.6L350.7 412.3L352.9 411.7L354.7 411.6L356.5 412.7L357.6 414.3L359.0 412.8L359.3 414.9L360.9 416.5L363.4 417.6L365.4 417.9L368.1 416.5L369.1 413.5L370.3 411.2L370.8 409.0L370.3 406.9L368.7 404.6L367.4 403.0L365.4 401.7L364.8 398.9L363.4 398.2L362.7 395.7L362.0 397.0L362.0 400.0L361.3 400.8L360.4 400.7L358.7 399.5L357.8 398.9L358.5 396.8L355.8 396.2L354.3 396.8L353.4 398.8L351.8 398.2L349.9 398.6L348.8 400.4L347.9 401.1L346.3 402.5L344.1 403.1L342.3 404.0Z" fill="#b9d8da"/><path d="M169.4 349.1L189.8 349.1L193.8 350.0L197.4 351.4L198.9 352.5L198.9 355.4L201.4 354.3L203.2 353.5L204.3 352.7L206.9 352.7L208.6 350.6L209.6 350.8L210.2 352.9L208.0 353.9L208.0 355.7L205.1 356.7L203.6 359.7L204.0 361.1L200.0 363.8L199.8 365.6L200.7 368.0L200.0 369.2L198.7 367.4L197.6 365.4L194.1 365.2L193.8 366.2L190.5 365.8L188.1 367.4L188.2 368.5L186.5 367.4L185.1 365.6L184.0 366.2L182.7 365.4L181.4 363.9L180.2 364.4L178.1 364.4L175.4 363.4L173.6 363.2L171.1 361.8L169.8 359.0L168.7 356.7L168.3 354.5L168.7 351.7L168.2 349.6Z" fill="#46c7b4"/><path d="M137.5 328.3L141.0 325.7L144.8 324.4L148.3 325.1L154.8 326.0L156.3 326.5L156.3 337.7L159.9 339.6L157.0 338.3L154.1 338.0L151.4 337.4L148.3 338.8L146.8 340.9L143.9 341.7L141.0 343.2L138.8 343.9L136.3 344.8L138.1 344.0L141.7 341.7L144.3 339.4L141.0 338.2L137.9 336.3L138.8 334.6L141.7 332.9L138.1 332.8L136.4 331.6L139.5 330.1L137.5 328.3Z" fill="#46c7b4"/><path d="M257.6 354.2L258.1 351.7L257.3 350.7L255.5 350.0L255.5 349.4L257.8 349.3L257.6 348.4L260.0 348.0L260.8 347.1L262.0 348.2L263.5 348.6L264.9 349.1L264.4 350.4L263.3 351.6L264.0 351.9L263.9 353.5L264.4 353.8L263.5 354.4L262.2 354.2L261.2 354.5L260.0 355.0L257.6 354.2Z" fill="#7fd2c4"/><path d="M254.8 348.1L256.8 347.6L260.0 347.0L260.2 345.6L259.1 344.7L257.8 343.2L257.5 342.4L257.6 340.6L256.6 339.5L255.3 339.5L254.4 340.6L254.9 342.2L255.4 343.4L256.6 343.6L256.8 344.8L255.6 344.9L255.4 346.2L256.5 346.8L255.2 346.5Z" fill="#8fd6ca"/><path d="M266.9 313.9L270.6 317.0L275.0 315.5L278.6 311.5L273.5 310.6L267.7 311.8Z" fill="#c2e2dc"/><path d="M254.6 360.7L251.8 363.0L251.9 365.4L250.6 366.7L252.6 367.2L252.6 366.3L255.3 365.4L256.3 364.2L258.1 363.4L257.6 361.3Z" fill="#c5e3dc"/><path d="M280.8 326.8L279.9 328.7L280.8 330.5L280.4 334.1L279.3 337.4L279.3 338.7L279.2 340.6L279.7 342.2L281.5 342.7L282.2 345.0L283.7 345.9L284.8 347.7L286.6 348.1L288.1 348.5L287.8 350.2L287.0 350.9" fill="none" stroke="#fff" stroke-opacity="0.75" stroke-width="0.35"/><path d="M293.5 352.7L293.9 351.4L295.3 350.0L296.8 346.7L299.0 347.4L303.3 347.4L303.3 344.2L309.2 342.8L312.8 344.7L315.0 344.2L319.4 347.2L322.3 348.9L324.5 347.6L330.3 346.2L333.9 347.8L337.6 348.8L343.4 348.1L346.3 345.7L351.4 348.1L356.5 349.8L354.3 353.6L354.0 355.1" fill="none" stroke="#fff" stroke-opacity="0.75" stroke-width="0.35"/><path d="M289.2 355.4L290.6 356.3L292.8 355.8L294.2 355.6L293.5 352.7" fill="none" stroke="#fff" stroke-opacity="0.75" stroke-width="0.35"/><path d="M322.3 348.9L324.5 351.8L328.8 354.8L335.4 355.8L340.5 354.1L345.6 350.9L343.4 348.1" fill="none" stroke="#fff" stroke-opacity="0.75" stroke-width="0.35"/><path d="M322.3 348.9L319.0 352.3L317.2 355.0L312.8 358.0L313.5 359.7L315.7 361.3L317.2 363.8L317.9 365.4L323.0 367.4L325.9 367.2L329.6 367.0L330.3 370.1L331.7 372.0L333.2 371.2L336.1 371.0L337.6 372.0" fill="none" stroke="#fff" stroke-opacity="0.75" stroke-width="0.35"/><path d="M296.1 356.3L298.3 356.3L299.7 352.7L302.6 353.2L307.0 354.5L309.9 355.4L312.8 354.5L317.2 355.0" fill="none" stroke="#fff" stroke-opacity="0.75" stroke-width="0.35"/><path d="M298.3 359.4L301.2 359.1L303.3 360.1L307.0 359.3L309.9 359.3L311.0 360.1L313.5 359.7" fill="none" stroke="#fff" stroke-opacity="0.75" stroke-width="0.35"/><path d="M291.0 357.6L293.9 357.3L294.6 358.0" fill="none" stroke="#fff" stroke-opacity="0.75" stroke-width="0.35"/><path d="M291.0 357.6L291.0 359.7L289.8 359.6L286.6 359.8L285.2 359.8" fill="none" stroke="#fff" stroke-opacity="0.75" stroke-width="0.35"/><path d="M303.3 360.1L303.3 364.6L304.8 365.9L303.8 369.2" fill="none" stroke="#fff" stroke-opacity="0.75" stroke-width="0.35"/><path d="M311.0 360.1L310.3 362.2L309.5 364.2L307.4 365.5L304.8 365.9" fill="none" stroke="#fff" stroke-opacity="0.75" stroke-width="0.35"/><path d="M313.5 359.7L312.8 363.0L310.6 367.0L309.9 369.3L308.6 370.3" fill="none" stroke="#fff" stroke-opacity="0.75" stroke-width="0.35"/><path d="M285.5 365.8L287.3 363.8L291.0 366.0L293.5 366.2L294.2 367.0" fill="none" stroke="#fff" stroke-opacity="0.75" stroke-width="0.35"/><path d="M291.0 359.7L292.4 363.0L293.9 365.2" fill="none" stroke="#fff" stroke-opacity="0.75" stroke-width="0.35"/><path d="M296.8 373.9L299.3 374.8" fill="none" stroke="#fff" stroke-opacity="0.75" stroke-width="0.35"/><path d="M290.2 375.0L293.2 375.4L296.8 373.9" fill="none" stroke="#fff" stroke-opacity="0.75" stroke-width="0.35"/><path d="M323.0 367.4L323.7 368.2L325.9 369.3L326.3 372.0" fill="none" stroke="#fff" stroke-opacity="0.75" stroke-width="0.35"/><path d="M330.3 370.1L329.6 373.1L330.6 375.4L331.0 376.9" fill="none" stroke="#fff" stroke-opacity="0.75" stroke-width="0.35"/><path d="M331.7 372.0L332.5 374.7L335.4 375.4L336.1 377.3" fill="none" stroke="#fff" stroke-opacity="0.75" stroke-width="0.35"/><path d="M333.6 379.0L334.7 377.6L336.8 377.2" fill="none" stroke="#fff" stroke-opacity="0.75" stroke-width="0.35"/><path d="M275.0 342.2L278.6 340.6" fill="none" stroke="#fff" stroke-opacity="0.75" stroke-width="0.35"/><path d="M274.2 341.7L278.2 342.2" fill="none" stroke="#fff" stroke-opacity="0.75" stroke-width="0.35"/><path d="M276.0 344.2L279.3 346.2L282.2 345.7" fill="none" stroke="#fff" stroke-opacity="0.75" stroke-width="0.35"/><path d="M276.4 347.2L276.4 349.5L280.8 350.0L287.0 350.9" fill="none" stroke="#fff" stroke-opacity="0.75" stroke-width="0.35"/><path d="M269.1 344.2L269.5 347.2L267.7 348.1L268.4 349.5L271.3 350.0L275.7 350.0L277.9 350.0L280.8 351.4" fill="none" stroke="#fff" stroke-opacity="0.75" stroke-width="0.35"/><path d="M263.7 344.7L263.3 347.2L263.5 348.6L264.8 350.3L266.6 350.5L268.4 350.4L271.3 350.0" fill="none" stroke="#fff" stroke-opacity="0.75" stroke-width="0.35"/><path d="M267.7 350.9L266.6 351.4L264.0 351.9" fill="none" stroke="#fff" stroke-opacity="0.75" stroke-width="0.35"/><path d="M268.9 352.2L271.0 351.4L273.5 351.8L275.7 353.6L279.3 353.9" fill="none" stroke="#fff" stroke-opacity="0.75" stroke-width="0.35"/><path d="M280.4 356.3L279.3 355.8" fill="none" stroke="#fff" stroke-opacity="0.75" stroke-width="0.35"/><path d="M277.9 355.7L275.0 355.1L273.1 355.0" fill="none" stroke="#fff" stroke-opacity="0.75" stroke-width="0.35"/><path d="M273.5 355.0L274.2 356.7L275.7 356.3" fill="none" stroke="#fff" stroke-opacity="0.75" stroke-width="0.35"/><path d="M257.6 354.2L260.0 355.0L261.2 355.0" fill="none" stroke="#fff" stroke-opacity="0.75" stroke-width="0.35"/><path d="M253.8 355.4L253.5 357.6L253.8 359.4" fill="none" stroke="#fff" stroke-opacity="0.75" stroke-width="0.35"/><path d="M273.5 327.4L276.4 328.0L279.7 327.4L280.8 326.8" fill="none" stroke="#fff" stroke-opacity="0.75" stroke-width="0.35"/><path d="M267.7 339.1L268.0 336.9L267.7 333.5L269.9 330.5L272.0 328.0L273.5 327.4" fill="none" stroke="#fff" stroke-opacity="0.75" stroke-width="0.35"/><path d="M276.4 331.2L276.8 328.0L273.9 327.4" fill="none" stroke="#fff" stroke-opacity="0.75" stroke-width="0.35"/><path d="M277.1 364.1L277.1 371.6L285.8 371.6" fill="none" stroke="#fff" stroke-opacity="0.75" stroke-width="0.35"/><path d="M277.1 371.6L276.4 373.1L276.4 376.5L275.0 378.6L276.0 381.3L278.6 384.3" fill="none" stroke="#fff" stroke-opacity="0.75" stroke-width="0.35"/><path d="M266.2 365.4L267.7 370.5L270.6 370.6L276.4 373.5" fill="none" stroke="#fff" stroke-opacity="0.75" stroke-width="0.35"/><path d="M265.9 359.7L264.8 363.0L266.2 365.4L265.9 367.8L267.7 370.5" fill="none" stroke="#fff" stroke-opacity="0.75" stroke-width="0.35"/><path d="M258.1 363.4L256.4 365.8L252.6 367.2L255.4 369.3L258.9 372.0L261.9 373.5L267.7 370.5" fill="none" stroke="#fff" stroke-opacity="0.75" stroke-width="0.35"/><path d="M246.6 372.4L249.5 372.4L250.2 370.5L252.6 367.2" fill="none" stroke="#fff" stroke-opacity="0.75" stroke-width="0.35"/><path d="M250.2 376.9L255.3 375.8L254.9 369.3" fill="none" stroke="#fff" stroke-opacity="0.75" stroke-width="0.35"/><path d="M255.3 375.8L261.9 376.9L261.9 373.5" fill="none" stroke="#fff" stroke-opacity="0.75" stroke-width="0.35"/><path d="M261.9 376.9L264.8 378.0L269.1 378.4L270.2 373.1L270.6 370.6" fill="none" stroke="#fff" stroke-opacity="0.75" stroke-width="0.35"/><path d="M269.1 378.4L269.9 381.3L272.8 381.3L275.0 378.6" fill="none" stroke="#fff" stroke-opacity="0.75" stroke-width="0.35"/><path d="M269.9 381.3L270.2 386.4L272.0 385.4L278.6 384.3" fill="none" stroke="#fff" stroke-opacity="0.75" stroke-width="0.35"/><path d="M278.6 384.3L280.8 385.4L284.4 384.6L288.1 385.0L289.5 385.0L291.0 384.3L293.5 382.1L294.6 379.9" fill="none" stroke="#fff" stroke-opacity="0.75" stroke-width="0.35"/><path d="M284.4 384.6L285.9 381.3L285.5 377.3L287.7 376.5" fill="none" stroke="#fff" stroke-opacity="0.75" stroke-width="0.35"/><path d="M246.8 378.8L250.2 378.8L252.8 380.2L253.1 382.4L256.8 380.2L258.9 379.9L260.8 378.8L261.9 376.9" fill="none" stroke="#fff" stroke-opacity="0.75" stroke-width="0.35"/><path d="M256.8 384.3L256.8 380.2" fill="none" stroke="#fff" stroke-opacity="0.75" stroke-width="0.35"/><path d="M260.4 383.3L261.1 379.3" fill="none" stroke="#fff" stroke-opacity="0.75" stroke-width="0.35"/><path d="M265.1 384.6L266.9 383.2L268.4 380.6L269.1 378.4" fill="none" stroke="#fff" stroke-opacity="0.75" stroke-width="0.35"/><path d="M265.9 387.2L267.2 386.3L270.6 386.3L272.0 385.4" fill="none" stroke="#fff" stroke-opacity="0.75" stroke-width="0.35"/><path d="M267.7 391.5L269.1 391.2L270.6 392.1L273.5 393.0L276.4 395.9L279.3 394.1L280.8 393.7L280.8 390.8L280.4 389.0L280.8 387.9L281.5 385.1" fill="none" stroke="#fff" stroke-opacity="0.75" stroke-width="0.35"/><path d="M280.8 389.0L283.7 388.6L283.7 391.2L287.5 391.3" fill="none" stroke="#fff" stroke-opacity="0.75" stroke-width="0.35"/><path d="M283.7 388.6L284.1 385.4L284.4 384.6" fill="none" stroke="#fff" stroke-opacity="0.75" stroke-width="0.35"/><path d="M289.5 388.6L288.8 385.1L289.5 385.0" fill="none" stroke="#fff" stroke-opacity="0.75" stroke-width="0.35"/><path d="M267.7 400.5L273.5 400.8L274.2 401.1L277.1 401.0" fill="none" stroke="#fff" stroke-opacity="0.75" stroke-width="0.35"/><path d="M273.5 400.8L273.5 404.2L273.5 409.2L271.3 409.2" fill="none" stroke="#fff" stroke-opacity="0.75" stroke-width="0.35"/><path d="M276.4 395.9L275.0 397.4L275.0 400.0" fill="none" stroke="#fff" stroke-opacity="0.75" stroke-width="0.35"/><path d="M277.1 401.0L280.1 399.6L281.1 399.0L283.0 400.0L282.7 403.4L281.9 404.4L278.6 404.6L273.5 406.3" fill="none" stroke="#fff" stroke-opacity="0.75" stroke-width="0.35"/><path d="M280.8 393.7L284.1 396.2L288.4 395.6" fill="none" stroke="#fff" stroke-opacity="0.75" stroke-width="0.35"/><path d="M283.0 400.0L284.4 398.2L284.1 396.2" fill="none" stroke="#fff" stroke-opacity="0.75" stroke-width="0.35"/><path d="M278.6 404.6L277.1 407.1L273.5 406.3" fill="none" stroke="#fff" stroke-opacity="0.75" stroke-width="0.35"/><path d="M280.1 410.4L279.0 409.6L282.6 409.2" fill="none" stroke="#fff" stroke-opacity="0.75" stroke-width="0.35"/><path d="M156.3 326.5L156.3 337.7" fill="none" stroke="#fff" stroke-opacity="0.75" stroke-width="0.35"/><path d="M191.8 377.3L193.4 374.8L194.0 374.8L194.7 376.2" fill="none" stroke="#fff" stroke-opacity="0.75" stroke-width="0.35"/><path d="M193.9 376.2L195.2 377.6L197.1 377.6L198.3 377.0" fill="none" stroke="#fff" stroke-opacity="0.75" stroke-width="0.35"/><path d="M196.6 379.9L198.1 379.9" fill="none" stroke="#fff" stroke-opacity="0.75" stroke-width="0.35"/><path d="M198.5 381.8L198.6 381.0" fill="none" stroke="#fff" stroke-opacity="0.75" stroke-width="0.35"/><path d="M202.6 381.6L205.8 382.8L207.3 383.2L209.4 383.5L209.8 386.4L208.0 387.0L208.3 391.0L205.8 391.2L204.3 388.3L201.6 386.8" fill="none" stroke="#fff" stroke-opacity="0.75" stroke-width="0.35"/><path d="M215.3 381.7L214.5 384.3L215.3 386.9L217.4 386.4L219.6 386.4L221.4 385.0" fill="none" stroke="#fff" stroke-opacity="0.75" stroke-width="0.35"/><path d="M217.4 383.5L216.7 385.0L218.2 386.4" fill="none" stroke="#fff" stroke-opacity="0.75" stroke-width="0.35"/><path d="M219.6 383.9L219.6 385.2" fill="none" stroke="#fff" stroke-opacity="0.75" stroke-width="0.35"/><path d="M200.5 390.4L204.0 389.0L204.3 388.3" fill="none" stroke="#fff" stroke-opacity="0.75" stroke-width="0.35"/><path d="M205.8 391.2L206.2 394.8L208.3 395.9L208.7 398.9L208.2 400.8L207.8 401.5" fill="none" stroke="#fff" stroke-opacity="0.75" stroke-width="0.35"/><path d="M208.3 395.9L210.9 395.1L214.2 397.8L215.3 399.6L216.7 400.0L216.7 402.7L213.8 404.2L210.9 404.2L209.4 404.9L208.2 400.8" fill="none" stroke="#fff" stroke-opacity="0.75" stroke-width="0.35"/><path d="M216.7 402.7L218.9 404.6L219.3 406.9L216.7 408.4L213.8 404.2" fill="none" stroke="#fff" stroke-opacity="0.75" stroke-width="0.35"/><path d="M219.3 406.9L220.0 408.0L217.1 410.4L220.0 413.2" fill="none" stroke="#fff" stroke-opacity="0.75" stroke-width="0.35"/><path d="M217.1 410.4L216.4 413.6" fill="none" stroke="#fff" stroke-opacity="0.75" stroke-width="0.35"/><path d="M209.4 404.9L209.1 408.0L208.0 410.4L207.6 412.8L207.3 417.0L206.9 420.4L206.7 424.0L206.2 426.7L206.5 429.1L208.7 429.8" fill="none" stroke="#fff" stroke-opacity="0.75" stroke-width="0.35"/></g></svg>
<div class="abs" style="left:140.2px;top:304.9px;width:7.8px;height:8.6px;background:#a0a4ab;border-radius:1px;color:#d9dce0;font-size:7px;line-height:8.6px;text-align:center">+</div>
<div class="abs" style="left:140.2px;top:316.3px;width:7.8px;height:7.4px;background:#a0a4ab;border-radius:1px"><div class="abs" style="left:2.2px;top:3.2px;width:3.4px;height:0.9px;background:#d9dce0"></div></div>

<!-- device granularity -->
<div class="panel" style="left:405px;top:277px;width:265px;height:178px"></div>
<div class="ptitle" style="left:414.5px;top:283px">Device granularity</div>
<div class="keb" style="left:659.8px;top:285.6px"><i style="top:0"></i><i style="top:2.5px"></i><i style="top:5px"></i></div>
<div class="abs" style="left:451.2px;top:305.1px;width:6.8px;height:6.5px;background:#5b7dd0"></div>
<div class="lg" style="left:461px;top:304.6px">smartphone; 521x, 1.52%</div>
<div class="abs" style="left:546px;top:305.1px;width:6.7px;height:6.5px;background:#efefef"></div>
<div class="lg" style="left:555.6px;top:304.6px">phablet; 120x, 0.35%</div>
<div class="abs" style="left:492.2px;top:317.6px;width:6.6px;height:6.3px;background:#3f3f3f"></div>
<div class="lg" style="left:502.2px;top:317.1px">desktop; 33649x, 98.13%</div>
<svg class="abs" style="left:0;top:0" width="678" height="472"><path d="M538.60 383.80 L538.60 330.60 A53.20 53.20 0 0 1 543.67 330.84 Z" fill="#5b7dd0" stroke="#fff" stroke-width="1.1" stroke-linejoin="round"/><path d="M538.60 383.80 L543.67 330.84 A53.20 53.20 0 0 1 544.84 330.97 Z" fill="#eeeeee" stroke="#fff" stroke-width="1.1" stroke-linejoin="round"/><path d="M538.60 383.80 L544.84 330.97 A53.20 53.20 0 1 1 538.59 330.60 Z" fill="#3f3f3f" stroke="#fff" stroke-width="1.1" stroke-linejoin="round"/></svg>

<!-- bottom panels -->
<div class="panel" style="left:133px;top:461px;width:267px;height:30px"></div>
<div class="ptitle" style="left:143px;top:466.6px">Page Visits</div>
<div class="keb" style="left:388.3px;top:469px"><i style="top:0"></i><i style="top:2.7px"></i></div>
<div class="panel" style="left:405px;top:461px;width:265px;height:30px"></div>
<div class="ptitle" style="left:414.5px;top:466.6px">Form Submissions</div>
<div class="keb" style="left:659.8px;top:469px"><i style="top:0"></i><i style="top:2.7px"></i></div>

</body></html>
